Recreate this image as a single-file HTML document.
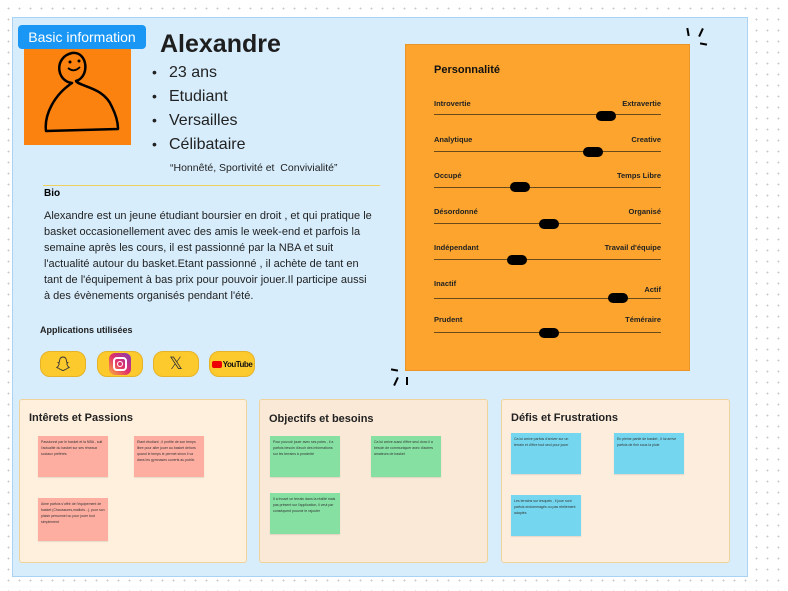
<!DOCTYPE html>
<html><head><meta charset="utf-8"><style>
*{margin:0;padding:0;box-sizing:border-box}
body{width:788px;height:591px;overflow:hidden;background:#fff;font-family:"Liberation Sans",sans-serif;position:relative;
background-image:radial-gradient(#c9c9c9 0.8px,transparent 1px);background-size:11px 11px;background-position:3px 3px}
.a{position:absolute}
.frame{left:12px;top:17px;width:736px;height:560px;background:#d7edfc;border:1px solid #a9d3f5}
.badge{left:18px;top:25px;width:128px;height:24px;background:#1a97f5;border-radius:4px;color:#fff;font-size:14px;line-height:24px;text-align:center}
.name{left:160px;top:30px;font-size:25px;font-weight:bold;color:#1e1e1e}
ul{left:152px;top:62px;font-size:16px;color:#222;list-style:none}
ul li{height:24px;line-height:20px}
ul li:before{content:"•";display:inline-block;width:17px;font-size:14px}
.quote{left:170px;top:162px;font-size:10.5px;color:#222}
.bioline{left:43px;top:185px;width:337px;height:1px;background:#f0cf5a}
.bio{left:44px;top:188px;font-size:10px;font-weight:bold}
.biotext{left:44px;top:208px;width:330px;font-size:11px;line-height:16px;color:#222}
.apps{left:40px;top:325px;font-size:9px;font-weight:bold;color:#222}
.pill{top:351px;width:46px;height:26px;background:#fdca2e;border:1px solid #e6b228;border-radius:10px;display:flex;align-items:center;justify-content:center}
.card{left:405px;top:44px;width:285px;height:327px;background:#fca42d;border:1px solid #e9952a}
.ptitle{left:434px;top:64px;font-size:11px;font-weight:bold;color:#111}
.lab{font-size:7.5px;font-weight:bold;color:#222}
.line{left:434px;width:227px;height:1px;background:#6b4a1a}
.knob{width:20px;height:10px;background:#000;border-radius:5px}
.panel{top:399px;height:164px;border:1px solid #f0d39b;border-radius:3px}
.ph{font-size:11px;font-weight:bold;color:#222}
.st{width:70px;height:41px;font-size:3.5px;line-height:6px;padding:3px;color:#333;box-shadow:0 1px 1px rgba(0,0,0,.1)}
.r{background:#fdaea1}.g{background:#85e0a2}.b{background:#74d7ef}
</style></head><body>
<div class="a frame"></div>
<div class="a" style="left:24px;top:45px;width:107px;height:100px;background:#fc820f"></div>
<svg class="a" style="left:24px;top:45px" width="107" height="100" viewBox="0 0 107 100">
<path d="M48 38 C32 36 30 12 48 8 C64 6 66 32 52 36 C56 42 80 42 88 62 C93 72 94 78 94 84 L22 86 C20 70 30 50 48 38 Z" fill="none" stroke="#000" stroke-width="2.5" stroke-linejoin="round"/>
<circle cx="46" cy="17" r="1.5"/><circle cx="55" cy="16" r="1.5"/>
<path d="M44 23 Q50 28 56 22" fill="none" stroke="#000" stroke-width="1.8"/>
</svg>
<div class="a badge">Basic information</div>
<div class="a name">Alexandre</div>
<ul class="a"><li>23 ans</li><li>Etudiant</li><li>Versailles</li><li>Célibataire</li></ul>
<div class="a quote">“Honnêté, Sportivité et &nbsp;Convivialité”</div>
<div class="a bioline"></div>
<div class="a bio">Bio</div>
<div class="a biotext">Alexandre est un jeune étudiant boursier en droit , et qui pratique le basket occasionellement avec des amis le week-end et parfois la semaine après les cours, il est passionné par la NBA et suit l'actualité autour du basket.Etant passionné , il achète de tant en tant de l'équipement à bas prix pour pouvoir jouer.Il participe aussi à des évènements organisés pendant l'été.</div>
<div class="a apps">Applications utilisées</div>
<div class="a pill" style="left:40px"><svg width="14" height="16" viewBox="0 0 14 16"><path d="M7 1C4 1 3.5 3.5 3.5 6L2 6.5 3.3 8C2.5 10 1.5 11 0.8 11.5 2 12.3 3 12 3.5 13 5 13.5 6 14.5 7 14.5S9 13.5 10.5 13C11 12 12 12.3 13.2 11.5 12.5 11 11.5 10 10.7 8L12 6.5 10.5 6C10.5 3.5 10 1 7 1Z" fill="none" stroke="#333" stroke-width="0.9"/></svg></div>
<div class="a pill" style="left:97px"><div style="width:22px;height:22px;border-radius:6px;background:linear-gradient(45deg,#fbb03b,#e1306c,#833ab4);display:flex;align-items:center;justify-content:center"><div style="width:14px;height:14px;border:2px solid #fff;border-radius:4px;display:flex;align-items:center;justify-content:center"><div style="width:6px;height:6px;border:1.5px solid #fff;border-radius:50%"></div></div></div></div>
<div class="a pill" style="left:153px"><span style="font-size:17px;color:#333">𝕏</span></div>
<div class="a pill" style="left:209px"><div style="width:10px;height:7px;background:#e00;border-radius:2px;margin-right:1px"></div><span style="font-size:8px;font-weight:bold;letter-spacing:-0.5px;color:#111">YouTube</span></div>

<div class="a card"></div>
<div class="a" style="left:687px;top:28px;width:2px;height:8px;background:#000;transform:rotate(-10deg)"></div>
<div class="a" style="left:700px;top:28px;width:2px;height:9px;background:#000;transform:rotate(25deg)"></div>
<div class="a" style="left:700px;top:43px;width:7px;height:2px;background:#000;transform:rotate(10deg)"></div>
<div class="a" style="left:391px;top:369px;width:7px;height:2px;background:#000;transform:rotate(10deg)"></div>
<div class="a" style="left:395px;top:377px;width:2px;height:9px;background:#000;transform:rotate(25deg)"></div>
<div class="a" style="left:406px;top:377px;width:2px;height:8px;background:#000"></div>
<div class="a ptitle">Personnalité</div>

<div class="a lab" style="left:434px;top:99px">Introvertie</div><div class="a lab" style="right:127px;top:99px">Extravertie</div>
<div class="a line" style="top:114px"></div><div class="a knob" style="left:596px;top:111px"></div>
<div class="a lab" style="left:434px;top:135px">Analytique</div><div class="a lab" style="right:127px;top:135px">Creative</div>
<div class="a line" style="top:151px"></div><div class="a knob" style="left:583px;top:147px"></div>
<div class="a lab" style="left:434px;top:171px">Occupé</div><div class="a lab" style="right:127px;top:171px">Temps Libre</div>
<div class="a line" style="top:187px"></div><div class="a knob" style="left:510px;top:182px"></div>
<div class="a lab" style="left:434px;top:207px">Désordonné</div><div class="a lab" style="right:127px;top:207px">Organisé</div>
<div class="a line" style="top:223px"></div><div class="a knob" style="left:539px;top:219px"></div>
<div class="a lab" style="left:434px;top:243px">Indépendant</div><div class="a lab" style="right:127px;top:243px">Travail d'équipe</div>
<div class="a line" style="top:259px"></div><div class="a knob" style="left:507px;top:255px"></div>
<div class="a lab" style="left:434px;top:279px">Inactif</div><div class="a lab" style="right:127px;top:285px">Actif</div>
<div class="a line" style="top:298px"></div><div class="a knob" style="left:608px;top:293px"></div>
<div class="a lab" style="left:434px;top:315px">Prudent</div><div class="a lab" style="right:127px;top:315px">Téméraire</div>
<div class="a line" style="top:332px"></div><div class="a knob" style="left:539px;top:328px"></div>

<div class="a panel" style="left:19px;width:228px;background:#fef0dc"></div>
<div class="a ph" style="left:29px;top:412px">Intêrets et Passions</div>
<div class="a st r" style="left:38px;top:436px">Passionné par le basket et la NBA , suit l'actualité du basket sur ses réseaux sociaux préférés</div>
<div class="a st r" style="left:134px;top:436px">Etant étudiant , il profite de son temps libre pour aller jouer au basket dehors quand le temps le permet sinon il va dans les gymnases ouverts au public</div>
<div class="a st r" style="left:38px;top:498px;height:43px">Aime parfois s'offrir de l'équipement de basket (Chaussures,maillots...), pour son plaisir personnel ou pour jouer tout simplement</div>

<div class="a panel" style="left:259px;width:229px;background:#fbe9d7"></div>
<div class="a ph" style="left:269px;top:413px">Objectifs et besoins</div>
<div class="a st g" style="left:270px;top:436px">Pour pouvoir jouer avec ses potes , il a parfois besoin d'avoir des informations sur les terrains à proximité</div>
<div class="a st g" style="left:371px;top:436px">Ca lui arrive aussi d'être seul donc il a besoin de communiquer avec d'autres amateurs de basket</div>
<div class="a st g" style="left:270px;top:493px">Il a trouvé un terrain dans la réalité mais pas présent sur l'application, il veut par conséquent pouvoir le rajouter</div>

<div class="a panel" style="left:501px;width:229px;background:#fceddd"></div>
<div class="a ph" style="left:511px;top:412px">Défis et Frustrations</div>
<div class="a st b" style="left:511px;top:433px">Ca lui arrive parfois d'arriver sur un terrain et d'être tout seul pour jouer</div>
<div class="a st b" style="left:614px;top:433px">En pleine partie de basket , il lui arrive parfois de finir sous la pluie</div>
<div class="a st b" style="left:511px;top:495px">Les terrains sur lesquels , il joue sont parfois endommagés ou pas réellement adaptés</div>
</body></html>
